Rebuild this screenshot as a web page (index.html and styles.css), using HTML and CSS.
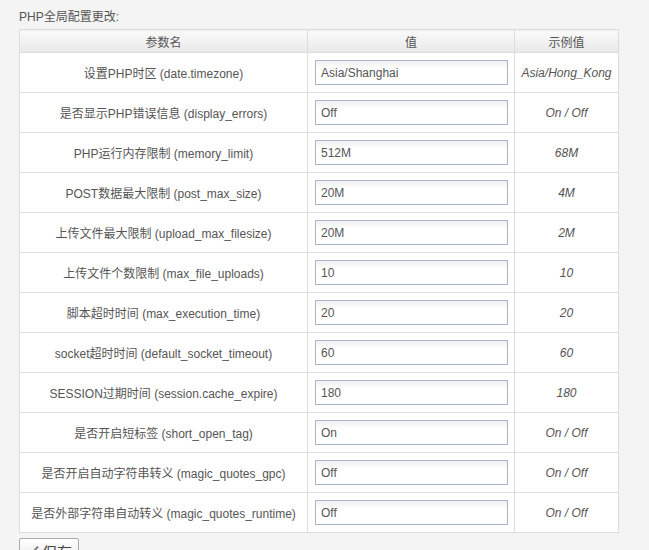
FILE: index.html
```html
<!DOCTYPE html>
<html>
<head>
<meta charset="utf-8">
<link rel="stylesheet" href="styles.css">
</head>
<body>
<div class="page">
  <div class="title">PHP全局配置更改:</div>
  <table class="cfg">
    <thead>
      <tr><th class="c1">参数名</th><th class="c2">值</th><th class="c3">示例值</th></tr>
    </thead>
    <tbody>
      <tr><td class="c1">设置PHP时区 (date.timezone)</td><td class="c2"><input class="inp" value="Asia/Shanghai"></td><td class="c3">Asia/Hong_Kong</td></tr>
      <tr><td class="c1">是否显示PHP错误信息 (display_errors)</td><td class="c2"><input class="inp" value="Off"></td><td class="c3">On / Off</td></tr>
      <tr><td class="c1">PHP运行内存限制 (memory_limit)</td><td class="c2"><input class="inp" value="512M"></td><td class="c3">68M</td></tr>
      <tr><td class="c1">POST数据最大限制 (post_max_size)</td><td class="c2"><input class="inp" value="20M"></td><td class="c3">4M</td></tr>
      <tr><td class="c1">上传文件最大限制 (upload_max_filesize)</td><td class="c2"><input class="inp" value="20M"></td><td class="c3">2M</td></tr>
      <tr><td class="c1">上传文件个数限制 (max_file_uploads)</td><td class="c2"><input class="inp" value="10"></td><td class="c3">10</td></tr>
      <tr><td class="c1">脚本超时时间 (max_execution_time)</td><td class="c2"><input class="inp" value="20"></td><td class="c3">20</td></tr>
      <tr><td class="c1">socket超时时间 (default_socket_timeout)</td><td class="c2"><input class="inp" value="60"></td><td class="c3">60</td></tr>
      <tr><td class="c1">SESSION过期时间 (session.cache_expire)</td><td class="c2"><input class="inp" value="180"></td><td class="c3">180</td></tr>
      <tr><td class="c1">是否开启短标签 (short_open_tag)</td><td class="c2"><input class="inp" value="On"></td><td class="c3">On / Off</td></tr>
      <tr><td class="c1">是否开启自动字符串转义 (magic_quotes_gpc)</td><td class="c2"><input class="inp" value="Off"></td><td class="c3">On / Off</td></tr>
      <tr><td class="c1">是否外部字符串自动转义 (magic_quotes_runtime)</td><td class="c2"><input class="inp" value="Off"></td><td class="c3">On / Off</td></tr>
    </tbody>
  </table>
  <button class="save"><svg class="chk" width="14" height="12" viewBox="0 0 14 12"><path d="M1 7 L5 10.5 L13 1.5" fill="none" stroke="#8a8a8a" stroke-width="2.2"/></svg><span>保存</span></button>
</div>
</body>
</html>
```
FILE: styles.css
```css
html, body { margin: 0; padding: 0; }
body {
  background: #f4f4f4;
  font-family: "Liberation Sans", Arial, "Noto Sans CJK SC", sans-serif;
  font-size: 12px;
  color: #555;
}
.page { padding: 9px 0 0 19px; }
.title { height: 20px; line-height: 16px; }
.cfg {
  border-collapse: collapse;
  background: #fff;
  width: 600px;
  table-layout: fixed;
}
.cfg th, .cfg td {
  border: 1px solid #dcdcdc;
  text-align: center;
  padding: 0;
}
.cfg th {
  height: 22px;
  font-weight: normal;
  font-size: 12px;
  background: linear-gradient(#fafafa, #e9e9e9);
}
.cfg td { height: 39px; }
.c1 { width: 287px; }
.c2 { width: 206px; }
.cfg td.c2 { text-align: left; padding-left: 7px; }
.cfg td.c3 { font-style: italic; }
.inp {
  box-sizing: border-box;
  width: 193px;
  height: 25px;
  border: 1px solid #a9b5cb;
  font: 12px "Liberation Sans", Arial, sans-serif;
  color: #555;
  padding: 0 5px;
  background: linear-gradient(#f0f0f0, #fff 8px);
  display: block;
}
.save {
  margin-top: 5px;
  box-sizing: border-box;
  width: 60px;
  height: 26px;
  border: 1px solid #aaa;
  border-radius: 2px;
  background: linear-gradient(#fff, #e6e6e6);
  font: 15px "Liberation Sans", "Noto Sans CJK SC", sans-serif;
  color: #444;
  display: flex;
  align-items: center;
  gap: 3px;
  padding: 0 5px;
  white-space: nowrap;
}
```
